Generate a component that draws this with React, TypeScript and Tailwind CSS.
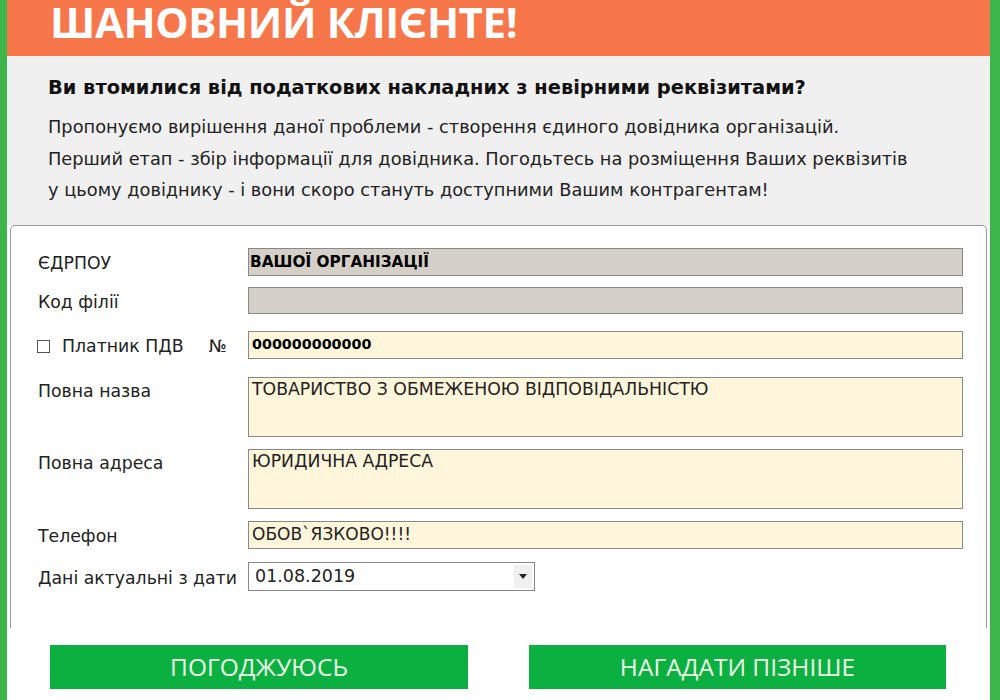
import React from "react";

const body = { fontFamily: '"DejaVu Sans", Verdana, sans-serif' };

function Field({ label, children, top = false }: { label: React.ReactNode; children: React.ReactNode; top?: boolean }) {
  return (
    <div className={`flex ${top ? "items-start" : "items-center"}`}>
      <div className={`w-[210px] shrink-0 text-[17.3px] leading-[22px] text-[#222] ${top ? "pt-[3px]" : "pt-[2px]"}`}>{label}</div>
      {children}
    </div>
  );
}

export default function App() {
  return (
    <div className="w-[1000px] h-[700px] overflow-hidden bg-white border-l-[7px] border-r-[10px] border-[#3db54a] flex flex-col" style={body}>
      <div className="h-[56px] shrink-0 bg-[#f7774a] pl-[43px] flex items-start">
        <div className="text-white font-bold text-[42px] leading-[44px] tracking-[-0.4px]" style={{ fontFamily: '"Open Sans", sans-serif' }}>
          ШАНОВНИЙ КЛІЄНТЕ!
        </div>
      </div>
      <div className="h-[169px] shrink-0 bg-[#f0f0f0] pl-[41px] pt-[20px] text-[#222]">
        <div className="text-[19.4px] font-bold leading-[24px] text-[#111]">Ви втомилися від податкових накладних з невірними реквізитами?</div>
        <div className="text-[17.8px] leading-[31.5px] mt-[11px]">
          <div>Пропонуємо вирішення даної проблеми - створення єдиного довідника організацій.</div>
          <div>Перший етап - збір інформації для довідника. Погодьтесь на розміщення Ваших реквізитів</div>
          <div>у цьому довіднику - і вони скоро стануть доступними Вашим контрагентам!</div>
        </div>
      </div>
      <div className="flex-1 bg-white px-[3px]">
        <div className="h-[403px] border-t border-l border-r border-[#9a9a9a] rounded-t-[5px] pl-[27px] pr-[23px] pt-[22px] flex flex-col">
          <Field label="ЄДРПОУ">
            <div className="flex-1 h-[28px] bg-[#d4d0c8] border border-[#888] px-[1px] flex items-center text-[15.3px] font-bold text-black">
              ВАШОЇ ОРГАНІЗАЦІЇ
            </div>
          </Field>
          <div className="h-[11px]" />
          <Field label="Код філії">
            <div className="flex-1 h-[27px] bg-[#d4d0c8] border border-[#888]" />
          </Field>
          <div className="h-[17px]" />
          <Field
            label={
              <div className="flex items-center">
                <span className="w-[13px] h-[13px] border border-[#555] bg-white ml-[-1px] mr-[12px]" />
                <span>Платник ПДВ</span>
                <span className="ml-[25px]">№</span>
              </div>
            }
          >
            <div className="flex-1 h-[28px] bg-[#fff6dc] border border-[#888] px-[3px] flex items-center text-[14.3px] font-bold text-black">
              000000000000
            </div>
          </Field>
          <div className="h-[18px]" />
          <Field label="Повна назва" top>
            <div className="flex-1 h-[60px] bg-[#fff6dc] border border-[#888] px-[3px] pt-[1px] text-[17.3px] text-[#222] leading-[21px]">
              ТОВАРИСТВО З ОБМЕЖЕНОЮ ВІДПОВІДАЛЬНІСТЮ
            </div>
          </Field>
          <div className="h-[12px]" />
          <Field label="Повна адреса" top>
            <div className="flex-1 h-[60px] bg-[#fff6dc] border border-[#888] px-[3px] pt-[1px] text-[17.3px] text-[#222] leading-[21px]">
              ЮРИДИЧНА АДРЕСА
            </div>
          </Field>
          <div className="h-[12px]" />
          <Field label="Телефон">
            <div className="flex-1 h-[28px] bg-[#fff6dc] border border-[#888] px-[3px] flex items-center text-[17px] text-[#222]">
              ОБОВ`ЯЗКОВО!!!!
            </div>
          </Field>
          <div className="h-[13px]" />
          <Field label="Дані актуальні з дати">
            <div className="w-[287px] h-[29px] bg-white border border-[#888] pl-[6px] pr-[2px] flex items-center justify-between text-[17.5px] text-[#222]">
              <span>01.08.2019</span>
              <span className="w-[18px] h-[23px] bg-[#f0f0f0] flex items-center justify-center">
                <svg width="8" height="5" viewBox="0 0 8 5"><path d="M0 0h8L4 5z" fill="#222" /></svg>
              </span>
            </div>
          </Field>
        </div>
        <div className="flex gap-[61px] pl-[40px] pt-[17px]">
          <button className="w-[418px] h-[44px] bg-[#0cb040] text-[#eafbe8] text-[24.5px]" style={{ fontFamily: '"Open Sans", sans-serif' }}>
            ПОГОДЖУЮСЬ
          </button>
          <button className="w-[417px] h-[44px] bg-[#0cb040] text-[#eafbe8] text-[24.5px]" style={{ fontFamily: '"Open Sans", sans-serif' }}>
            НАГАДАТИ ПІЗНІШЕ
          </button>
        </div>
      </div>
    </div>
  );
}
